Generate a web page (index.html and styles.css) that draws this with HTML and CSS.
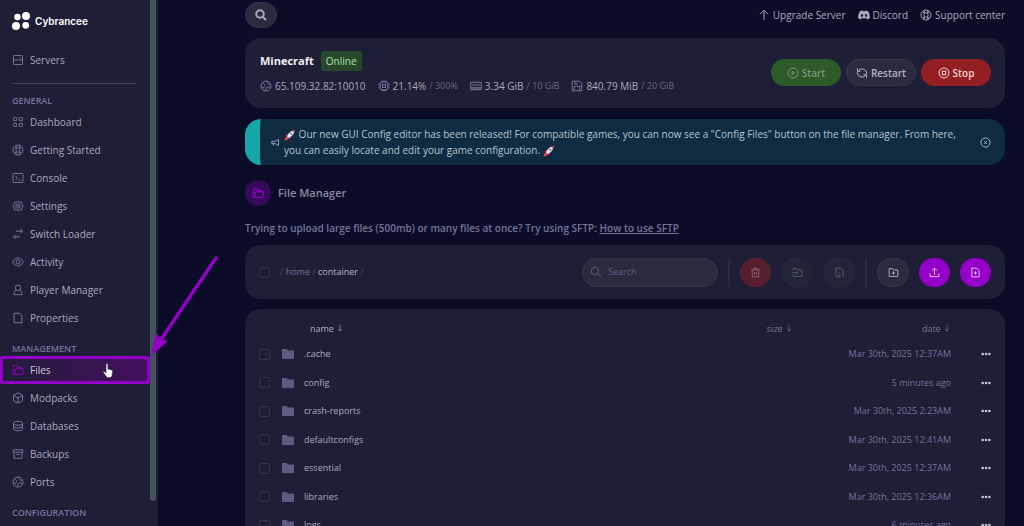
FILE: index.html
```html
<!DOCTYPE html>
<html lang="en">

<head>
    <meta charset="UTF-8">
    <meta name="viewport" content="width=device-width, initial-scale=1.0">
    <title>Cybrancee - File Manager</title>
    <link rel="stylesheet" href="styles.css">
</head>

<body>
    <!-- icon set -->
    <svg class="sprite" aria-hidden="true">
        <symbol id="i-server" viewBox="0 0 24 24"><rect x="3" y="3" width="18" height="18" rx="1.5" /><path d="M3 12h18M16 8h2" /></symbol>
        <symbol id="i-grid" viewBox="0 0 24 24"><rect x="3" y="3" width="6.500" height="6.500" rx="1.5" /><rect x="14.500" y="3" width="6.500" height="6.500" rx="1.5" /><rect x="3" y="14.500" width="6.500" height="6.500" rx="1.5" /><rect x="14.500" y="14.500" width="6.500" height="6.500" rx="1.5" /></symbol>
        <symbol id="i-buoy" viewBox="0 0 24 24"><circle cx="12" cy="12" r="10" /><rect x="8" y="8" width="8" height="8" rx="2.500" /><path d="M5.500 5.500l3.200 3.200M18.500 5.500l-3.200 3.200M5.500 18.500l3.200-3.200M18.500 18.500l-3.200-3.200M8.500 3.500v4.500M15.500 3.500v4.500M8.500 16v4.500M15.500 16v4.500" /></symbol>
        <symbol id="i-console" viewBox="0 0 24 24"><rect x="2" y="3" width="20" height="18" rx="1.500" /><path d="M7 8l4 4-4 4M12.500 16h5" /></symbol>
        <symbol id="i-gear" viewBox="0 0 24 24"><path d="M12 2l3 2.500 4-.3.700 3.800L22.500 12l-2.800 4-.700 3.800-4-.3-3 2.500-3-2.500-4 .3L4.300 16 1.500 12l2.800-4L5 4.200l4 .3z" /><circle cx="12" cy="12" r="4.500" /><circle cx="12" cy="12" r="1" /></symbol>
        <symbol id="i-swap" viewBox="0 0 24 24"><path d="M8 6.500h13M16.500 2l4.500 4.500L16.500 11M16 17.500H3M7.500 13L3 17.500 7.500 22" /></symbol>
        <symbol id="i-eye" viewBox="0 0 24 24"><path d="M1.500 12C4 6.500 8 4 12 4s8 2.500 10.500 8c-2.500 5.500-6.500 8-10.500 8s-8-2.500-10.500-8z" /><circle cx="12" cy="12" r="4" /></symbol>
        <symbol id="i-user" viewBox="0 0 24 24"><circle cx="12" cy="7.500" r="5.500" /><path d="M8 12l-4 5v4.500h16V17l-4-5" /></symbol>
        <symbol id="i-file" viewBox="0 0 24 24"><path d="M4 2.500h10.500L20 8v13.500H4z" /></symbol>
        <symbol id="i-folders" viewBox="0 0 24 24"><path d="M6 20.500H2.500v-17H10l2 3h7.500v3" /><path d="M8.500 9.500h14v9.500l-1.500 1.500H6V12z" /></symbol>
        <symbol id="i-box" viewBox="0 0 24 24"><path d="M12 1.500l9 5v11l-9 5-9-5v-11zM3 6.500l9 5.500 9-5.500M12 12v10" /></symbol>
        <symbol id="i-db" viewBox="0 0 24 24"><ellipse cx="12" cy="6.500" rx="9" ry="4" /><path d="M3 6.500v11c0 2.200 4 4 9 4s9-1.800 9-4v-11M3 12c0 2.200 4 4 9 4s9-1.800 9-4" /></symbol>
        <symbol id="i-archive" viewBox="0 0 24 24"><path d="M2.500 3.500h19v5h-19zM4 8.500v12h16v-12M8.500 13h7" /></symbol>
        <symbol id="i-globe" viewBox="0 0 24 24"><circle cx="12" cy="12" r="10" /><path d="M5 5.500c2 3 4 2 4.500 4.500.5 2-1.500 2-1.500 4s-1.500 2-5 0M14 3c-1 3 1 3.500 2 5 1 1.500 3 .5 5 .5M11 21.500c0-4 1.500-2.500 1.500-5.500 0-2.500 3.500-3 8.500-.5" /></symbol>
        <symbol id="i-cpu" viewBox="0 0 24 24"><rect x="4.500" y="4.500" width="15" height="15" rx="1.500" /><rect x="9" y="9" width="6" height="6" /><path d="M8.500 1v3M12 1v3M15.500 1v3M8.500 20v3M12 20v3M15.500 20v3M1 8.500h3M1 12h3M1 15.500h3M20 8.500h3M20 12h3M20 15.500h3" /></symbol>
        <symbol id="i-ram" viewBox="0 0 24 24"><path d="M1.500 4.500h21v15h-21zM1.500 15.500h21M6 8v4M10 8v4M14 8v4M18 8v4M6 16v3M10 16v3M14 16v3M18 16v3" /></symbol>
        <symbol id="i-save" viewBox="0 0 24 24"><path d="M2.500 2.500H17L21.500 7v14.500h-19zM6.500 21v-8.500h11V21M7.500 3v4.500H14" /></symbol>
        <symbol id="i-play" viewBox="0 0 24 24"><circle cx="12" cy="12" r="10" /><path d="M10 8.500v7l5.500-3.500z" /></symbol>
        <symbol id="i-restart" viewBox="0 0 24 24"><path d="M5 7a9.500 9.500 0 0 1 16.500 5.500v2M2.500 9.500v2A9.500 9.500 0 0 0 19 17M3 2.500V8.500h6M21 21.500v-6h-6" /></symbol>
        <symbol id="i-stop" viewBox="0 0 24 24"><circle cx="12" cy="12" r="10" /><rect x="8.500" y="8.500" width="7" height="7" /></symbol>
        <symbol id="i-up" viewBox="0 0 24 24"><path d="M12 22V3M4 10.500L12 2.500l8 8" /></symbol>
        <symbol id="i-down" viewBox="0 0 24 24"><path d="M12 2v19M7 16l5 5 5-5" /></symbol>
        <symbol id="i-discord" viewBox="0 0 24 24"><path class="solid" fill-rule="evenodd" d="M20 4.500A18 18 0 0 0 15.500 3l-.7 1.300a17 17 0 0 0-5.600 0L8.500 3A18 18 0 0 0 4 4.500C1 9 0 13.500.4 18A18 18 0 0 0 6.200 21l1.300-2.100-2-1 .5-.4a13 13 0 0 0 12 0l.5.400-2 1L17.800 21a18 18 0 0 0 5.800-3c.5-5-.9-9.500-3.600-13.500zM8 15.300c-1.200 0-2.100-1.100-2.100-2.500S6.800 10.300 8 10.300s2.200 1.100 2.200 2.500S9.200 15.300 8 15.300zm8 0c-1.200 0-2.100-1.100-2.100-2.500s.9-2.500 2.100-2.500 2.200 1.100 2.200 2.500-1 2.500-2.200 2.500z" /></symbol>
        <symbol id="i-search" viewBox="0 0 24 24"><circle cx="10" cy="10" r="7.500" /><path d="M15.500 15.500L22 22" /></symbol>
        <symbol id="i-horn" viewBox="0 0 24 24"><path d="M2 9h9l9-5v16l-9-5H2zM6 15v6" /></symbol>
        <symbol id="i-close" viewBox="0 0 24 24"><circle cx="12" cy="12" r="10" /><path d="M9 9l6 6M15 9l-6 6" /></symbol>
        <symbol id="i-trash" viewBox="0 0 24 24"><path d="M2 6.500h20M5 6.500V21.500h14v-15M8.500 6.500v-4h7v4M10 11v6M14 11v6" /></symbol>
        <symbol id="i-move" viewBox="0 0 24 24"><path d="M2.500 8V3.500H10l2 3h9.500v14h-19V17M1 12.500h12M9.500 9l3.500 3.500L9.500 16" /></symbol>
        <symbol id="i-zip" viewBox="0 0 24 24"><path d="M9 21.500H4v-19h10.500L20 8v13.500h-3M10 10v3M13 13v3M10 16v5.500h3V17" /></symbol>
        <symbol id="i-folder-add" viewBox="0 0 24 24"><path d="M2.500 3.500H10l2 3h9.500v14h-19zM12 9.500v7M8.500 13h7" /></symbol>
        <symbol id="i-upload" viewBox="0 0 24 24"><path d="M2.500 14v7h19v-7M12 17V3M6.500 8L12 2.500 17.500 8" /></symbol>
        <symbol id="i-file-add" viewBox="0 0 24 24"><path d="M4 2.500h10.500L20 8v13.500H4zM12 9.500v7M8.500 13h7" /></symbol>
        <symbol id="i-folder" viewBox="0 0 24 20"><path class="solid" d="M1.500 0H9l3 3h10.500A1.500 1.500 0 0 1 24 4.500v14a1.500 1.500 0 0 1-1.500 1.500h-21A1.500 1.500 0 0 1 0 18.500v-17A1.500 1.500 0 0 1 1.500 0z" /></symbol>
        <symbol id="i-dots" viewBox="0 0 24 8"><circle class="solid" cx="4" cy="4" r="3.200" /><circle class="solid" cx="12" cy="4" r="3.200" /><circle class="solid" cx="20" cy="4" r="3.200" /></symbol>
        <symbol id="i-rocket" viewBox="0 0 24 24"><path fill="#c22050" stroke="none" d="M3 13l5-4 3 1-5 6zM11 21l4-5-1-3-6 5z" /><path fill="#e8e9f0" stroke="none" d="M6 16C8 9 13 3 21 2.500 21 10 15 16 8 18z" /><path fill="#e02d48" stroke="none" d="M16.500 4c1.500-.8 3-1.300 5.500-2-.5 2.500-1 4-2 5.500z" /><circle cx="14.500" cy="9.500" r="2" fill="#4a7090" stroke="none" /><path fill="#f0443f" stroke="none" d="M5 15l4 4-3 3-5 1 1-5z" /></symbol>
    </svg>

    <div class="page">
        <aside class="sidebar">
            <nav class="menu">
                <a class="logo" href="#">
                    <svg class="logo-img" viewBox="0 0 18 18"><circle cx="5.500" cy="5" r="3.200" /><circle cx="14" cy="4" r="4" /><circle cx="4" cy="14" r="4" /><circle cx="13.700" cy="13.300" r="3.400" /></svg>
                    <span>Cybrancee</span>
                </a>
                <a class="menu-link" href="#"><svg class="icon"><use href="#i-server" /></svg>Servers</a>
                <hr class="menu-line">
                <h2 class="menu-title">GENERAL</h2>
                <a class="menu-link" href="#"><svg class="icon"><use href="#i-grid" /></svg>Dashboard</a>
                <a class="menu-link" href="#"><svg class="icon"><use href="#i-buoy" /></svg>Getting Started</a>
                <a class="menu-link" href="#"><svg class="icon"><use href="#i-console" /></svg>Console</a>
                <a class="menu-link" href="#"><svg class="icon"><use href="#i-gear" /></svg>Settings</a>
                <a class="menu-link" href="#"><svg class="icon"><use href="#i-swap" /></svg>Switch Loader</a>
                <a class="menu-link" href="#"><svg class="icon"><use href="#i-eye" /></svg>Activity</a>
                <a class="menu-link" href="#"><svg class="icon"><use href="#i-user" /></svg>Player Manager</a>
                <a class="menu-link" href="#"><svg class="icon"><use href="#i-file" /></svg>Properties</a>
                <h2 class="menu-title">MANAGEMENT</h2>
                <a class="menu-link active" href="#"><svg class="icon"><use href="#i-folders" /></svg>Files</a>
                <a class="menu-link" href="#"><svg class="icon"><use href="#i-box" /></svg>Modpacks</a>
                <a class="menu-link" href="#"><svg class="icon"><use href="#i-db" /></svg>Databases</a>
                <a class="menu-link" href="#"><svg class="icon"><use href="#i-archive" /></svg>Backups</a>
                <a class="menu-link" href="#"><svg class="icon"><use href="#i-globe" /></svg>Ports</a>
                <h2 class="menu-title">CONFIGURATION</h2>
            </nav>
            <div class="scrollbar"></div>
        </aside>

        <main class="main">
            <header class="topbar">
                <button class="search-btn" type="button" aria-label="Search"><svg class="icon bold"><use href="#i-search" /></svg></button>
                <div class="top-links">
                    <a href="#"><svg class="icon"><use href="#i-up" /></svg>Upgrade Server</a>
                    <a href="#"><svg class="icon"><use href="#i-discord" /></svg>Discord</a>
                    <a href="#"><svg class="icon"><use href="#i-buoy" /></svg>Support center</a>
                </div>
            </header>

            <section class="card server">
                <div class="server-info">
                    <div class="server-name">
                        <h1>Minecraft</h1>
                        <span class="badge">Online</span>
                    </div>
                    <ul class="stats">
                        <li><svg class="icon"><use href="#i-globe" /></svg>65.109.32.82:10010</li>
                        <li><svg class="icon"><use href="#i-cpu" /></svg>21.14% <small>/ 300%</small></li>
                        <li><svg class="icon"><use href="#i-ram" /></svg>3.34 GiB <small>/ 10 GiB</small></li>
                        <li><svg class="icon"><use href="#i-save" /></svg>840.79 MiB <small>/ 20 GiB</small></li>
                    </ul>
                </div>
                <div class="power">
                    <button class="power-btn start" type="button"><svg class="icon"><use href="#i-play" /></svg>Start</button>
                    <button class="power-btn restart" type="button"><svg class="icon"><use href="#i-restart" /></svg>Restart</button>
                    <button class="power-btn stop" type="button"><svg class="icon"><use href="#i-stop" /></svg>Stop</button>
                </div>
            </section>

            <section class="notice">
                <svg class="icon small"><use href="#i-horn" /></svg>
                <p><svg class="icon rocket"><use href="#i-rocket" /></svg> Our new GUI Config editor has been released! For compatible games, you can now see a "Config Files" button on the file manager. From here, you can easily locate and edit your game configuration. <svg class="icon rocket"><use href="#i-rocket" /></svg></p>
                <button class="close-btn" type="button" aria-label="Close"><svg class="icon"><use href="#i-close" /></svg></button>
            </section>

            <div class="heading">
                <span class="heading-icon"><svg class="icon"><use href="#i-folders" /></svg></span>
                <h2>File Manager</h2>
            </div>
            <p class="hint">Trying to upload large files (500mb) or many files at once? Try using SFTP: <a href="#">How to use SFTP</a></p>

            <section class="card toolbar">
                <input class="check" type="checkbox" aria-label="Select all">
                <div class="crumbs">/ <a href="#">home</a> / <a class="current" href="#">container</a> /</div>
                <label class="search-box">
                    <svg class="icon"><use href="#i-search" /></svg>
                    <input type="text" placeholder="Search" aria-label="Search files">
                </label>
                <span class="split"></span>
                <button class="tool-btn delete" type="button" aria-label="Delete"><svg class="icon"><use href="#i-trash" /></svg></button>
                <button class="tool-btn faded" type="button" aria-label="Move"><svg class="icon"><use href="#i-move" /></svg></button>
                <button class="tool-btn faded" type="button" aria-label="Archive"><svg class="icon"><use href="#i-zip" /></svg></button>
                <span class="split"></span>
                <button class="tool-btn" type="button" aria-label="New folder"><svg class="icon"><use href="#i-folder-add" /></svg></button>
                <button class="tool-btn purple" type="button" aria-label="Upload"><svg class="icon"><use href="#i-upload" /></svg></button>
                <button class="tool-btn purple" type="button" aria-label="New file"><svg class="icon"><use href="#i-file-add" /></svg></button>
            </section>

            <section class="card files">
                <table>
                    <thead>
                        <tr>
                            <th class="col-check"></th>
                            <th class="col-icon"></th>
                            <th class="col-name">name <svg class="icon"><use href="#i-down" /></svg></th>
                            <th class="col-size">size <svg class="icon"><use href="#i-down" /></svg></th>
                            <th class="col-date">date <svg class="icon"><use href="#i-down" /></svg></th>
                            <th class="col-more"></th>
                        </tr>
                    </thead>
                    <tbody>
                        <tr>
                            <td><input class="check" type="checkbox" aria-label=".cache"></td>
                            <td><svg class="folder"><use href="#i-folder" /></svg></td>
                            <td>.cache</td>
                            <td></td>
                            <td class="date">Mar 30th, 2025 12:37AM</td>
                            <td><button class="more-btn" type="button" aria-label="More"><svg class="dots"><use href="#i-dots" /></svg></button></td>
                        </tr>
                        <tr>
                            <td><input class="check" type="checkbox" aria-label="config"></td>
                            <td><svg class="folder"><use href="#i-folder" /></svg></td>
                            <td>config</td>
                            <td></td>
                            <td class="date">5 minutes ago</td>
                            <td><button class="more-btn" type="button" aria-label="More"><svg class="dots"><use href="#i-dots" /></svg></button></td>
                        </tr>
                        <tr>
                            <td><input class="check" type="checkbox" aria-label="crash-reports"></td>
                            <td><svg class="folder"><use href="#i-folder" /></svg></td>
                            <td>crash-reports</td>
                            <td></td>
                            <td class="date">Mar 30th, 2025 2:23AM</td>
                            <td><button class="more-btn" type="button" aria-label="More"><svg class="dots"><use href="#i-dots" /></svg></button></td>
                        </tr>
                        <tr>
                            <td><input class="check" type="checkbox" aria-label="defaultconfigs"></td>
                            <td><svg class="folder"><use href="#i-folder" /></svg></td>
                            <td>defaultconfigs</td>
                            <td></td>
                            <td class="date">Mar 30th, 2025 12:41AM</td>
                            <td><button class="more-btn" type="button" aria-label="More"><svg class="dots"><use href="#i-dots" /></svg></button></td>
                        </tr>
                        <tr>
                            <td><input class="check" type="checkbox" aria-label="essential"></td>
                            <td><svg class="folder"><use href="#i-folder" /></svg></td>
                            <td>essential</td>
                            <td></td>
                            <td class="date">Mar 30th, 2025 12:37AM</td>
                            <td><button class="more-btn" type="button" aria-label="More"><svg class="dots"><use href="#i-dots" /></svg></button></td>
                        </tr>
                        <tr>
                            <td><input class="check" type="checkbox" aria-label="libraries"></td>
                            <td><svg class="folder"><use href="#i-folder" /></svg></td>
                            <td>libraries</td>
                            <td></td>
                            <td class="date">Mar 30th, 2025 12:36AM</td>
                            <td><button class="more-btn" type="button" aria-label="More"><svg class="dots"><use href="#i-dots" /></svg></button></td>
                        </tr>
                        <tr>
                            <td><input class="check" type="checkbox" aria-label="logs"></td>
                            <td><svg class="folder"><use href="#i-folder" /></svg></td>
                            <td>logs</td>
                            <td></td>
                            <td class="date">6 minutes ago</td>
                            <td><button class="more-btn" type="button" aria-label="More"><svg class="dots"><use href="#i-dots" /></svg></button></td>
                        </tr>
                    </tbody>
                </table>
            </section>
        </main>
    </div>

    <!-- arrow pointing at the Files link -->
    <svg class="arrow" viewBox="0 0 70 104"><path d="M65 4L9 87" stroke="#9400c8" stroke-width="3.500" stroke-linecap="round" /><path d="M0 102L5 79l5 6 7 2z" fill="#9400c8" /></svg>
    <svg class="pointer" viewBox="0 0 10 15"><path d="M3 1.500c0-1.300 1.900-1.300 1.900 0V6l3.700 1c.8.300 1.100.8 1 1.700L9 12.500 8 14.500H4L.5 9.800c-.5-1 .5-1.600 1.200-1L3 10z" fill="#fff" stroke="#222" stroke-width=".5" /></svg>
</body>

</html>
```
FILE: styles.css
```css
* {
    margin: 0;
    padding: 0;
    box-sizing: border-box;
}

body {
    background-color: #0b0c28;
    color: #a9a9bd;
    font-family: "Open Sans", "Noto Sans", sans-serif;
    font-size: 10px;
    line-height: 16px;
    height: 100vh;
    overflow: hidden;
    position: relative;
}

a {
    color: inherit;
    text-decoration: none;
}

li {
    list-style: none;
}

button,
input {
    font: inherit;
    color: inherit;
    border: none;
    background: none;
}

button {
    display: flex;
    align-items: center;
    justify-content: center;
    cursor: pointer;
}

.sprite {
    position: absolute;
    width: 0;
    height: 0;
}

.icon {
    width: 12px;
    height: 12px;
    flex: none;
    fill: none;
    stroke: currentColor;
    stroke-width: 2;
}

.icon.bold {
    stroke-width: 4;
}

.icon.small {
    width: 9px;
    height: 9px;
}

.solid {
    fill: currentColor;
    stroke: none;
}

.page {
    display: flex;
    height: 100%;
}

/* sidebar */
.sidebar {
    display: flex;
    width: 158px;
    flex: none;
    background-color: #1e1e37;
    overflow: hidden;
}

.menu {
    width: 150px;
}

.logo {
    display: flex;
    align-items: center;
    gap: 5px;
    height: 46px;
    padding: 0 12px 4px;
    color: #fff;
    font-family: Inter, sans-serif;
    font-weight: 600;
}

.logo-img {
    width: 18px;
    height: 18px;
    fill: #fff;
}

.menu-link {
    display: flex;
    align-items: center;
    gap: 6px;
    height: 28px;
    padding: 0 12px;
}

.menu-link .icon {
    color: #74749b;
}

.menu-line {
    border: none;
    height: 1px;
    margin: 9px 14px 9px 12px;
    background-color: #41415a;
}

.menu-title {
    height: 15px;
    padding-left: 12px;
    color: #74749b;
    font-size: 9px;
    font-weight: 600;
}

.menu-link + .menu-title {
    margin-top: 9px;
}

.menu-link.active {
    border: 3px solid #9400c8;
    border-radius: 3px;
    padding: 0 9px;
    color: #d0c8dc;
    background: linear-gradient(90deg, #211c39, #45105f);
}

.menu-link.active .icon {
    color: #9400c8;
}

.scrollbar {
    width: 6px;
    height: 501px;
    border-radius: 0 0 3px 3px;
    background-color: #43525d;
}

/* content */
.main {
    flex: 1;
    min-width: 0;
    padding: 2px 19px 0 87px;
}

.card {
    background-color: #1e1e37;
    border-radius: 16px;
}

.topbar {
    display: flex;
    justify-content: space-between;
    align-items: center;
    margin-bottom: 10px;
}

.search-btn {
    width: 32px;
    height: 26px;
    border: 1px solid #34344a;
    border-radius: 13px;
    background-color: #2b2b3f;
}

.top-links {
    display: flex;
    gap: 12px;
}

.top-links a {
    display: flex;
    align-items: center;
    gap: 3px;
}

.server {
    display: flex;
    justify-content: space-between;
    align-items: center;
    padding: 13px 14px 14px 15px;
    margin-bottom: 11px;
}

.server-name {
    display: flex;
    align-items: center;
    gap: 7px;
    margin-bottom: 7px;
}

.server-name h1 {
    color: #f0f0f5;
    font-size: 11px;
    font-weight: bold;
}

.badge {
    padding: 2px 5px;
    border-radius: 2px;
    background-color: #26492b;
    color: #b4e0a8;
}

.stats {
    display: flex;
    gap: 12px;
}

.stats li {
    display: flex;
    align-items: center;
    gap: 3px;
}

.stats .icon {
    color: #74749b;
}

.stats small {
    color: #66668a;
    font-size: 9px;
}

.power {
    display: flex;
    gap: 5px;
}

.power-btn {
    gap: 3px;
    width: 70px;
    height: 27px;
    border-radius: 14px;
    font-weight: 600;
}

.start {
    background-color: #2c5a28;
    color: #78967a;
}

.restart {
    border: 1px solid #36364b;
    background-color: #2b2b3f;
    color: #b4b4c4;
}

.stop {
    background-color: #931f22;
    color: #f2d6d8;
}

.notice {
    display: flex;
    align-items: center;
    gap: 4px;
    padding: 7px 14px 7px 11px;
    border-left: 15px solid #16a8a8;
    border-radius: 16px;
    background-color: #0e2b42;
    color: #b9c3cf;
    margin-bottom: 15px;
}

.notice p {
    flex: 1;
    padding-right: 14px;
}

.rocket {
    vertical-align: middle;
}

.close-btn .icon {
    width: 11px;
    height: 11px;
}

.heading {
    display: flex;
    align-items: center;
    gap: 7px;
    margin-bottom: 14px;
    color: #8a8aa4;
}

.heading h2 {
    font-size: 11px;
    font-weight: 600;
}

.heading-icon {
    display: flex;
    align-items: center;
    justify-content: center;
    width: 26px;
    height: 26px;
    border-radius: 50%;
    background-color: #350a58;
    color: #a100d8;
}

.hint {
    margin-bottom: 9px;
    color: #74749b;
    font-weight: 600;
}

.hint a {
    text-decoration: underline;
}

.check {
    appearance: none;
    display: block;
    width: 11px;
    height: 11px;
    border: 1px solid #33334a;
    border-radius: 2px;
}

/* toolbar */
.toolbar {
    display: flex;
    align-items: center;
    gap: 10px;
    height: 54px;
    padding: 0 14px;
    margin-bottom: 10px;
}

.crumbs {
    flex: 1;
    color: #45455e;
    font-size: 9px;
}

.crumbs a {
    color: #74749b;
}

.crumbs .current {
    color: #b4b4c4;
}

.search-box {
    display: flex;
    align-items: center;
    gap: 6px;
    width: 136px;
    height: 29px;
    padding: 0 7px;
    border: 1px solid #34344a;
    border-radius: 15px;
    background-color: #2b2b3f;
    color: #5c5c7e;
}

.search-box input {
    width: 100%;
    font-size: 9px;
}

.search-box input::placeholder {
    color: #5c5c7e;
}

.split {
    width: 2px;
    height: 29px;
    background-color: #2b2b3f;
}

.tool-btn {
    width: 32px;
    height: 29px;
    border: 1px solid #38384c;
    border-radius: 15px;
    background-color: #2b2b3f;
    color: #b4b4c4;
}

.tool-btn .icon {
    width: 11px;
    height: 11px;
}

.tool-btn.faded {
    border-color: #28283e;
    background-color: #23233a;
    color: #5c5c70;
}

.tool-btn.delete {
    width: 31px;
    border: none;
    background-color: #571e2e;
    color: #8e6a7c;
}

.tool-btn.purple {
    width: 31px;
    border: none;
    background-color: #9400c8;
    color: #ecc8f6;
}

/* file list */
.files {
    padding: 9px 14px 0;
}

.files table {
    width: 100%;
    border-collapse: collapse;
    table-layout: fixed;
    font-size: 9px;
}

.files th {
    height: 22px;
    color: #74749b;
    font-weight: normal;
    text-align: right;
}

.files th .icon {
    width: 8px;
    height: 8px;
}

.files td {
    height: 28px;
}

.files tr:nth-child(even) td {
    height: 29px;
}

.col-check {
    width: 23px;
}

.col-icon {
    width: 22px;
}

.files .col-name {
    padding-left: 6px;
    color: #a9a9bd;
    text-align: left;
}

.col-size {
    width: 60px;
}

.col-date {
    width: 158px;
}

.col-more {
    width: 40px;
}

.files .date {
    color: #74749b;
    text-align: right;
}

.folder {
    display: block;
    width: 12px;
    height: 10px;
    color: #5c5c82;
}

.more-btn {
    margin-left: auto;
}

.dots {
    display: block;
    width: 10px;
    height: 4px;
    color: #c4c4d0;
}

/* overlays */
.arrow {
    position: absolute;
    left: 151px;
    top: 254px;
    width: 70px;
    height: 104px;
    fill: none;
}

.pointer {
    position: absolute;
    left: 103px;
    top: 363px;
    width: 10px;
    height: 15px;
}
```
